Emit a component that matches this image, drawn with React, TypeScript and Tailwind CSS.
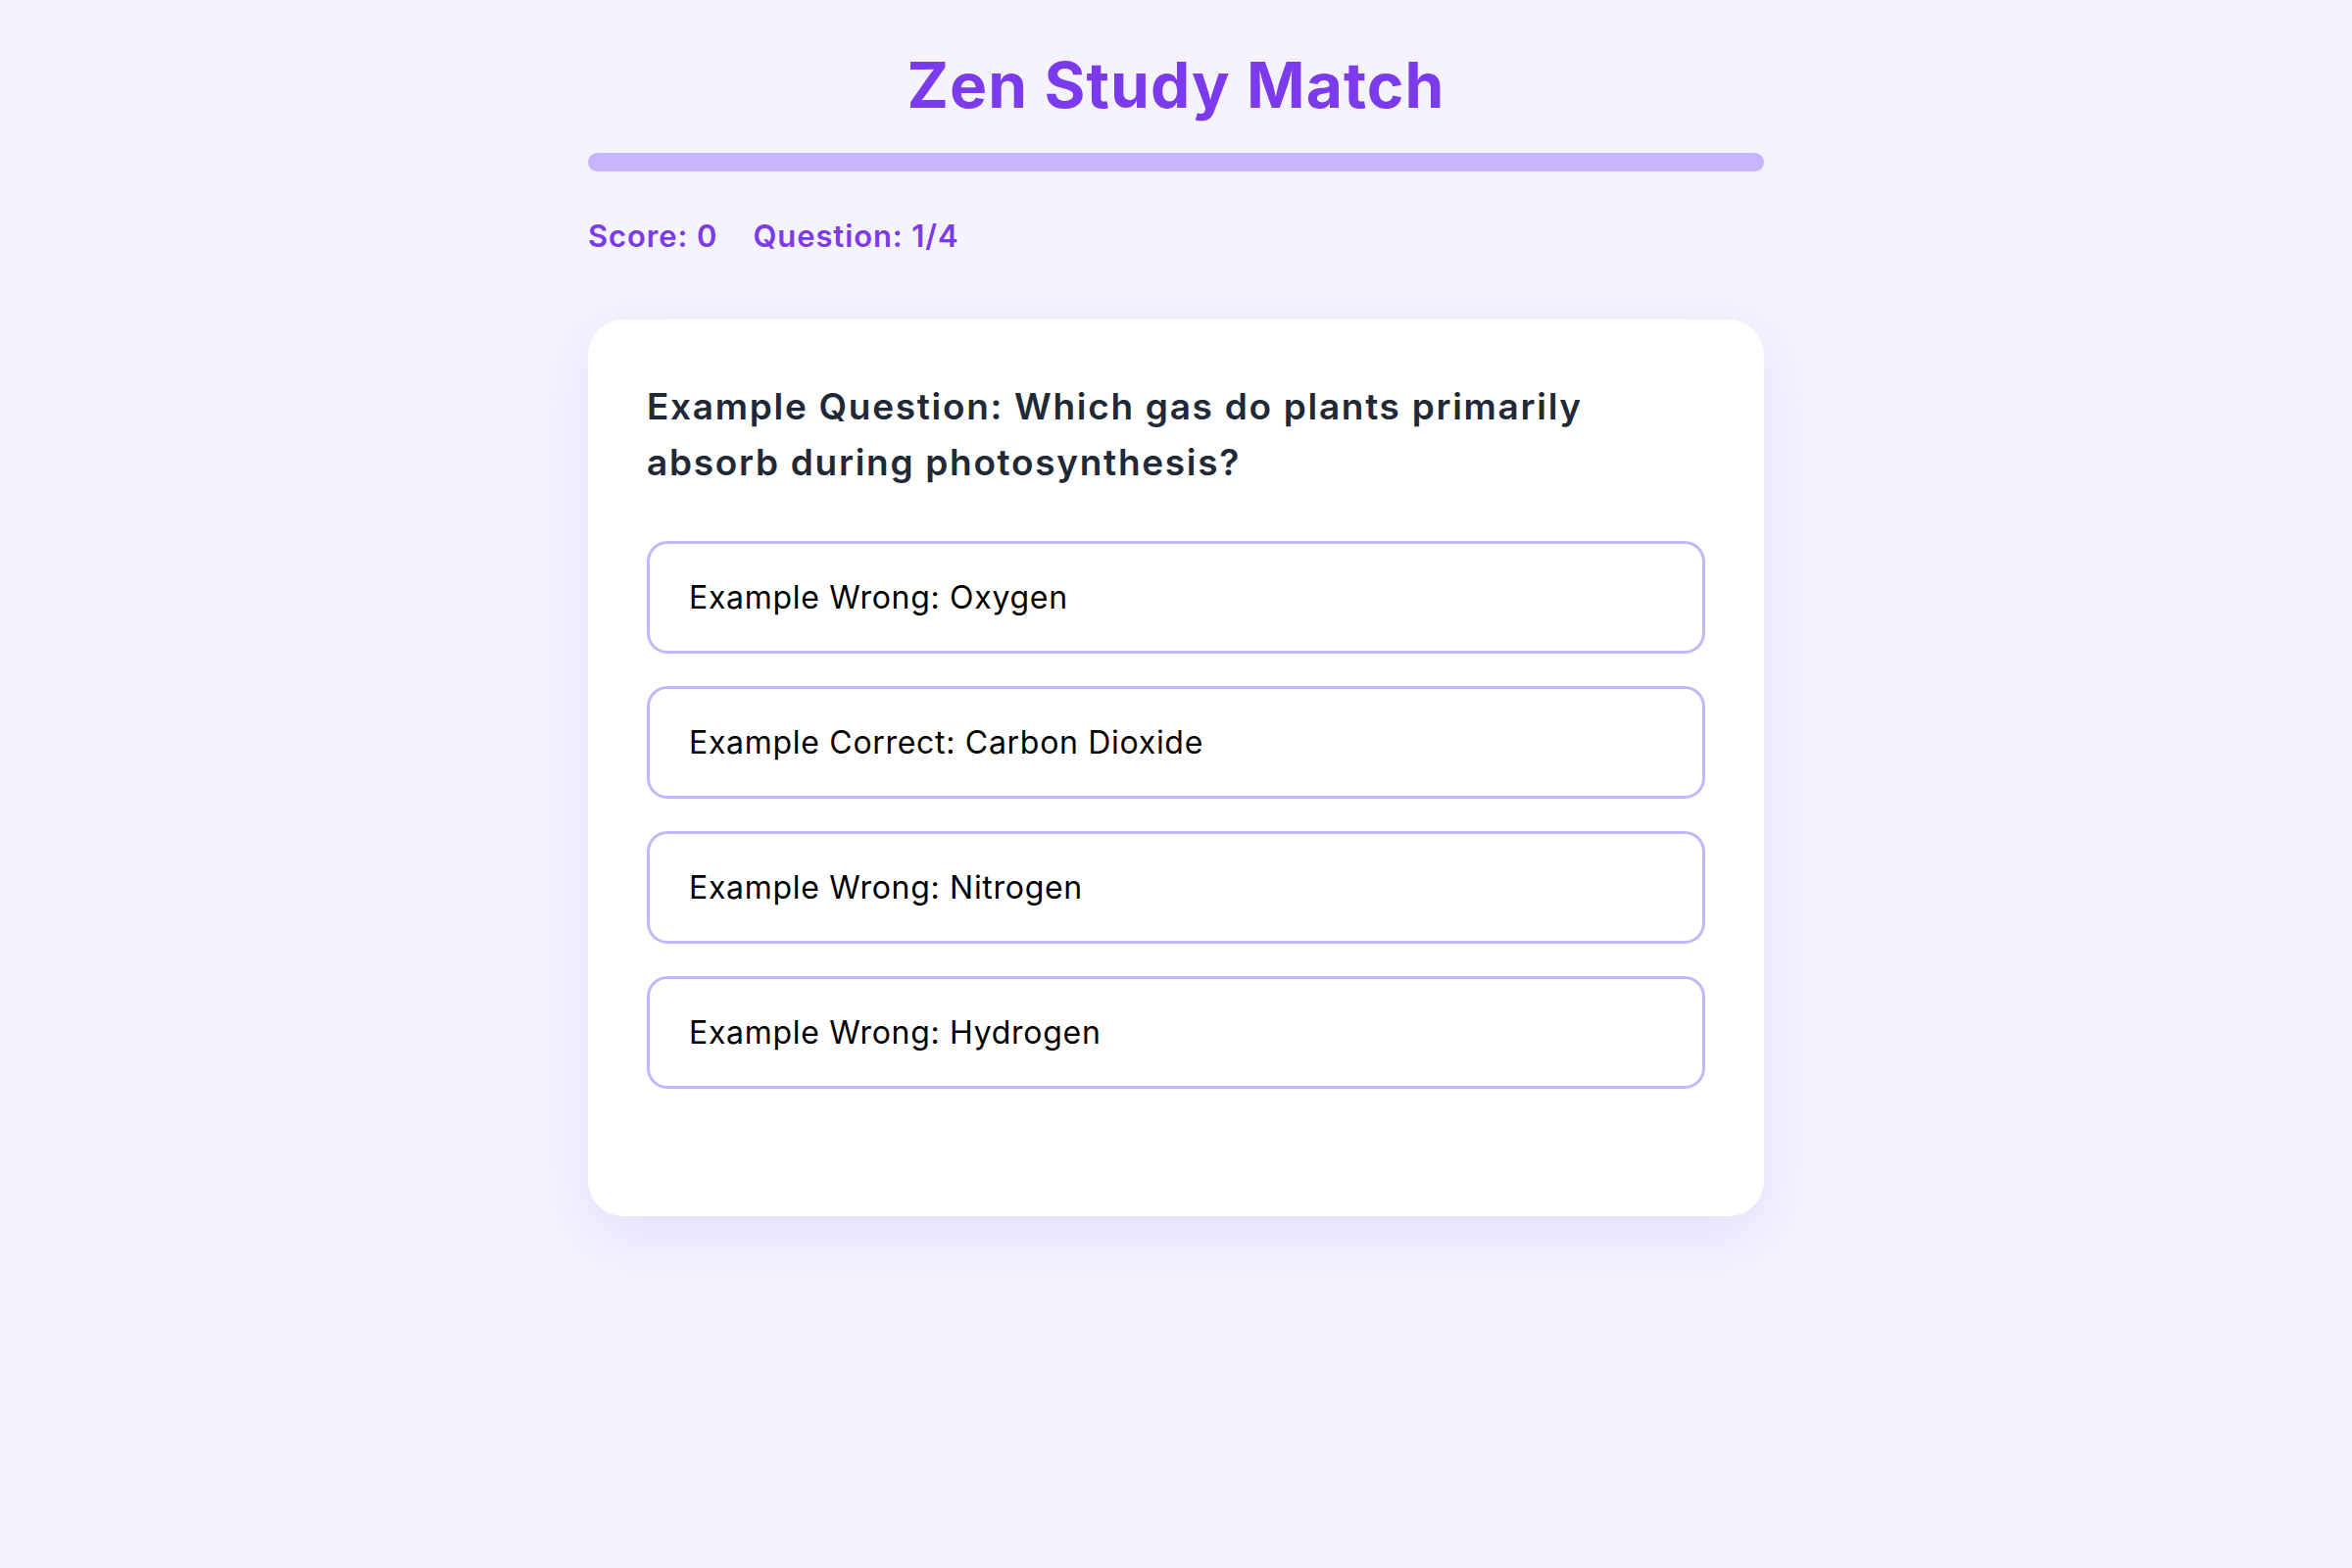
import { useState } from "react";

const QUESTIONS = [
  {
    text: "Example Question: Which gas do plants primarily absorb during photosynthesis?",
    options: [
      "Example Wrong: Oxygen",
      "Example Correct: Carbon Dioxide",
      "Example Wrong: Nitrogen",
      "Example Wrong: Hydrogen",
    ],
  },
];

export default function App() {
  const [score] = useState(0);
  const [index] = useState(0);
  const total = 4;
  const q = QUESTIONS[index];
  const progress = (index / total) * 100;

  return (
    <div className="min-h-screen bg-[#f5f3ff] font-['Inter',sans-serif]">
      <div className="mx-auto w-[1200px] pt-[48px] pb-20">
        <h1 className="text-center text-[64px] font-bold leading-[77px] tracking-[1.1px] text-[#7c3aed]">
          Zen Study Match
        </h1>

        {/* progress track */}
        <div className="mt-[31px] h-[19px] w-full overflow-hidden rounded-full bg-[#c4b5fd]">
          <div className="h-full rounded-full bg-[#8b5cf6]" style={{ width: `${progress}%` }} />
        </div>

        <div className="mt-[48px] flex gap-[36px] text-[31px] font-semibold leading-[36px] tracking-[0.9px] text-[#7c3aed]">
          <span>Score: {score}</span>
          <span>
            Question: {index + 1}/{total}
          </span>
        </div>

        <div className="mt-[67px] rounded-[36px] bg-white p-[60px] shadow-[0_20px_60px_rgba(139,92,246,0.14)]">
          <h2 className="text-[37px] font-semibold leading-[57px] tracking-[1.7px] text-[#1f2937]">{q.text}</h2>

          <div className="mt-[52px] flex flex-col gap-[33px]">
            {q.options.map((opt) => (
              <button
                key={opt}
                className="w-full rounded-[21px] border-[3px] border-[#c4b5fd] bg-white py-[30px] pl-[40px] text-left text-[32px] leading-[49px] tracking-[0.7px] text-black"
              >
                {opt}
              </button>
            ))}
          </div>

          {/* feedback area */}
          <div className="h-[70px]" />
        </div>
      </div>
    </div>
  );
}
